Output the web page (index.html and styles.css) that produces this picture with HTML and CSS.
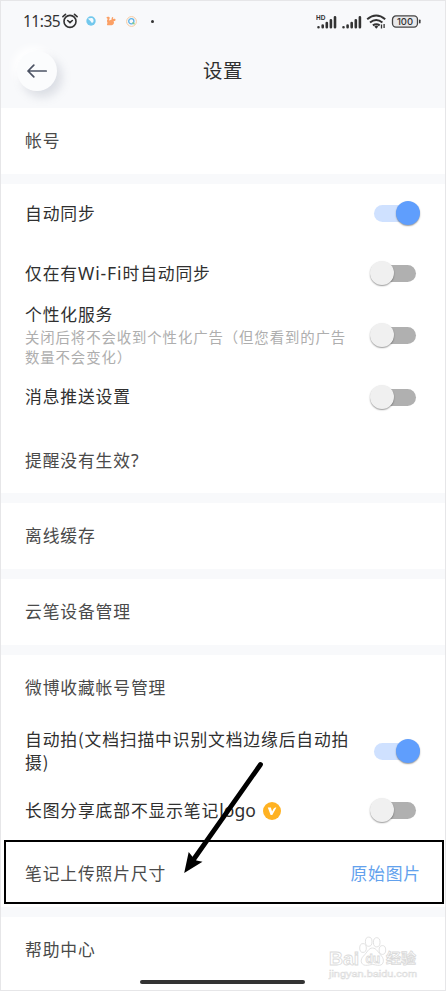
FILE: index.html
```html
<!DOCTYPE html>
<html lang="zh-CN">
  <head>
    <meta charset="UTF-8" />
    <meta name="viewport" content="width=device-width, initial-scale=1.0" />
    <title>设置</title>
    <link rel="stylesheet" href="styles.css">
  </head>
  <body>
    <div class="phone">
      <header class="header">
        <div class="statusbar">
          <span class="time">11:35</span>
          <svg class="alarm" width="16" height="16" viewBox="0 0 16 16" fill="none" stroke="#333" stroke-width="1.6" stroke-linecap="round">
            <circle cx="8" cy="8.4" r="6" />
            <path d="M5.7 7.5 8 9.6l2.3-2.1M.9 3.6 3.5 1.3M15.1 3.6l-2.6-2.3" />
          </svg>
          <svg class="app" width="10" height="10" viewBox="0 0 10 10">
            <circle cx="5" cy="5" r="4.7" fill="#72c8ed" />
            <path d="M1.5 2.2C3 3 4 1.6 6 2c1.8.5 2 3 1 4.6C5.8 7 5 6.4 4.700 5.200z" fill="#f4fbff" />
          </svg>
          <svg class="app" width="10" height="10" viewBox="0 0 10 10" fill="#fba065">
            <path d="M.4 1.7C1 .5 3.4.2 3.7 1.7c.2 1.1-.8 1.7-.5 2.500.4.8 1.500-.5 2.500-.7-.5-1.700.6-2.800 1.700-2.300-.8.6-.6 1.300.2 1.800 1.100-.7 2 0 2 1C9.500 5 8.300 5 7.600 5.300c1 1.500 0 3.600-2 4H1.300C.2 8.400 1.800 7.500 1.400 6.500 1 5.600.6 4.500 1.700 3z" />
          </svg>
          <svg class="app" width="11" height="11" viewBox="0 0 11 11" fill="none">
            <circle cx="5.5" cy="5.5" r="4.9" stroke="#f6c9a0" />
            <circle cx="5.3" cy="5.3" r="2.6" stroke="#5fb2e6" stroke-width="1.3" />
            <path d="m6.500 6.500 2 1.800" stroke="#8ccf80" stroke-width="1.4" />
          </svg>
          <span class="dot"></span>
          <svg class="system" width="108" height="18" viewBox="0 0 108 18">
            <text class="hd" x="0" y="7.6">HD</text>
            <g fill="none" stroke="#333" stroke-width="2.6" stroke-linecap="round">
              <path d="M2.5 15.2v.1M6.700 13.500v1.800M10.800 11v4.300M14.900 8.300v7M19 5.200v10.100" />
              <path d="M27.500 15.200v.1M31.600 13.500v1.800M35.700 11v4.300M39.800 8.300v7M43.900 5.200v10.100" />
            </g>
            <g fill="none" stroke="#333" stroke-width="2">
              <path d="M51.200 7.300q9-7.500 18 0M54 10.500q6.200-5 12.400 0M56.900 13.400q3.400-2.500 6.800 0" />
            </g>
            <path d="m58.300 14.500 2-1 2 1-2 2.200z" fill="#333" />
            <path d="M65.500 16.500v-4M68.100 12v4" stroke="#333" stroke-width="1.3" />
            <rect x="76.500" y="3.9" width="25" height="11.2" rx="3.5" fill="#e9e9eb" stroke="#444" stroke-width="1.3" />
            <path d="M103.800 8.200v2.600" stroke="#333" stroke-width="1.5" stroke-linecap="round" />
            <text class="battery" x="89" y="13">100</text>
          </svg>
        </div>
        <div class="titlebar">
          <span class="back">
            <svg width="22" height="14" viewBox="0 0 22 14" fill="none" stroke="#4c5364" stroke-width="1.7" stroke-linecap="round" stroke-linejoin="round">
              <path d="M20.200 7H2M7.800 1.200 2 7l5.800 5.800" />
            </svg>
          </span>
          <h1>设置</h1>
        </div>
      </header>

      <main>
        <section class="group">
          <div class="row single"><span class="label light">帐号</span></div>
        </section>

        <section class="group">
          <div class="row first"><span class="label">自动同步</span><span class="toggle on"></span></div>
          <div class="row wifi"><span class="label">仅在有<span class="latin wide">Wi-Fi</span>时自动同步</span><span class="toggle"></span></div>
          <div class="row">
            <div class="text">
              <span class="label">个性化服务</span>
              <p class="hint">关闭后将不会收到个性化广告（但您看到的广告<br>数量不会变化）</p>
            </div>
            <span class="toggle"></span>
          </div>
          <div class="row"><span class="label">消息推送设置</span><span class="toggle"></span></div>
          <div class="row last"><span class="label light">提醒没有生效<span class="latin wide">?</span></span></div>
        </section>

        <section class="group">
          <div class="row single"><span class="label light">离线缓存</span></div>
        </section>

        <section class="group">
          <div class="row single"><span class="label light">云笔设备管理</span></div>
        </section>

        <section class="group">
          <div class="row single"><span class="label light">微博收藏帐号管理</span></div>
          <div class="row scan"><span class="label">自动拍(文档扫描中识别文档边缘后自动拍<br>摄)</span><span class="toggle on"></span></div>
          <div class="row share">
            <span class="label">长图分享底部不显示笔记<span class="latin">logo</span></span>
            <svg class="vip" width="18" height="18" viewBox="0 0 18 18">
              <circle cx="9" cy="9" r="9" fill="#ffb222" />
              <path d="M4.800 5.500h3l1.300 4 1.300-2.500c.5-1 1.500-1.600 3-1.500L9.300 13H7.600z" fill="#fff" />
            </svg>
            <span class="toggle"></span>
          </div>
          <div class="row photo"><span class="label light">笔记上传照片尺寸</span><span class="value">原始图片</span></div>
        </section>

        <section class="group help">
          <div class="row single"><span class="label light">帮助中心</span></div>
        </section>
      </main>

      <div class="highlight"></div>
      <svg class="arrow" width="90" height="120" viewBox="0 0 90 120">
        <path d="M80.500 4.500 12.500 101" stroke="#000" stroke-width="4.8" stroke-linecap="round" />
        <path d="M4.200 113 8.700 92l4.800 6 3 2.500 6 1.300z" />
      </svg>

      <svg class="watermark" width="100" height="48" viewBox="0 0 100 48">
        <g class="outline">
          <text class="bai" x="1" y="28.5" textLength="30" lengthAdjust="spacingAndGlyphs">Bai</text>
          <ellipse cx="35" cy="12" rx="3.3" ry="4.4" />
          <ellipse cx="40.7" cy="5.7" rx="3.3" ry="4.6" />
          <ellipse cx="48.7" cy="6.3" rx="3.3" ry="4.6" />
          <ellipse cx="54.4" cy="14" rx="3.3" ry="4.4" />
          <path d="M44.500 12c4 0 6 5 9 8s2.500 9-2 9.300c-3 .2-5-.8-7-.8s-4 1-7 .8c-5-.3-5.500-6-2-9.300s5-8 9-8z" />
          <text class="du" x="37.5" y="27">du</text>
          <text class="jingyan" x="58" y="27" textLength="30" lengthAdjust="spacingAndGlyphs">经验</text>
          <text class="site" x="1" y="40.5" textLength="88" lengthAdjust="spacingAndGlyphs">jingyan.baidu.com</text>
        </g>
      </svg>
      <div class="homebar"></div>
    </div>
  </body>
</html>
```

FILE: styles.css
```css
* {
  box-sizing: border-box;
}

body {
  margin: 0;
  font-family: "Noto Sans CJK SC", sans-serif;
  background: #fff;
  color: #303030;
}

.phone {
  position: relative;
  width: 446px;
  height: 991px;
  overflow: hidden;
  border: 1px solid #e6e6e8;
  background: #f8f9fb;
}

.header {
  height: 107px;
}

.statusbar {
  display: flex;
  align-items: center;
  height: 40px;
  padding: 0 24px 0 22px;
}

.time {
  width: 36px;
  font-family: "Noto Sans", sans-serif;
  font-size: 15.5px;
  letter-spacing: -0.5px;
  color: #333;
}

.alarm {
  margin-left: 3px;
}

.app {
  margin-left: 10px;
}

.alarm + .app {
  margin-left: 8px;
}

.dot {
  width: 3px;
  height: 3px;
  margin-left: 14px;
  border-radius: 50%;
  background: #333;
}

.system {
  margin-left: auto;
  margin-right: -3px;
}

.hd {
  font: bold 6.5px "Liberation Sans", sans-serif;
  fill: #333;
}

.battery {
  font: 500 9.5px Inter, sans-serif;
  text-anchor: middle;
  fill: #333;
}

.titlebar {
  display: grid;
  grid-template-columns: 40px 1fr 40px;
  align-items: center;
  height: 59px;
  padding: 0 16px;
}

.back {
  display: flex;
  align-items: center;
  justify-content: center;
  width: 40px;
  height: 40px;
  border-radius: 50%;
  background: #fbfcfd;
  box-shadow: 5px 6px 10px rgba(130, 140, 160, 0.24), -4px -4px 9px #fff;
}

h1 {
  margin: 0;
  padding-bottom: 2px;
  font-size: 19.4px;
  font-weight: 400;
  line-height: 28px;
  letter-spacing: 0.6px;
  text-align: center;
}

.group {
  margin-bottom: 10px;
  background: #fff;
}

.row {
  display: flex;
  align-items: center;
  height: 62px;
  padding: 0 29px 0 24px;
}

.single {
  height: 66px;
}

.first {
  height: 59px;
}

.wifi {
  height: 61px;
}

.last {
  height: 65px;
}

.scan {
  height: 60px;
}

.share {
  height: 59px;
}

.photo {
  height: 67px;
}

.help {
  height: 74px;
  margin-bottom: 0;
}

.label {
  padding-bottom: 1px;
  font-size: 16.8px;
  line-height: 23px;
  letter-spacing: 0.87px;
  white-space: nowrap;
}

.latin {
  font-family: "Noto Sans", sans-serif;
  font-size: 17.5px;
  letter-spacing: 0.1px;
}

.wide {
  letter-spacing: 0.9px;
}

.light {
  color: #4a4a4a;
}

.text {
  display: flex;
  flex-direction: column;
}

.hint {
  margin: 0;
  font-size: 14.4px;
  line-height: 20px;
  letter-spacing: 0.9px;
  white-space: nowrap;
  color: #aeaeae;
}

.toggle {
  position: relative;
  flex: none;
  width: 42px;
  height: 17px;
  margin-left: auto;
  border-radius: 9px;
  background: #b0b0b0;
}

.toggle::after {
  content: "";
  position: absolute;
  top: -4px;
  left: -4px;
  width: 24px;
  height: 24px;
  border-radius: 50%;
  background: #f0f0f0;
  box-shadow: 0 1px 1.5px rgba(0, 0, 0, 0.4);
}

.toggle.on {
  background: #cfe1ff;
}

.toggle.on::after {
  left: 22px;
  background: #5f9efd;
}

.vip {
  margin-left: 7px;
}

.value {
  margin-left: auto;
  margin-right: -5px;
  padding-bottom: 1px;
  font-size: 16.8px;
  letter-spacing: 0.87px;
  color: #62a1ed;
}

/* marks drawn over the list */
.highlight {
  position: absolute;
  top: 839px;
  left: 3px;
  width: 440px;
  height: 64px;
  border: 2px solid #000;
}

.arrow {
  position: absolute;
  top: 759px;
  left: 179px;
}

.watermark {
  position: absolute;
  top: 935px;
  left: 327px;
}

.outline {
  fill: #fff;
  stroke: #dadada;
  stroke-width: 0.8px;
}

.bai {
  font: bold 18px "Liberation Sans", sans-serif;
}

.du {
  font: bold 12px "Liberation Sans", sans-serif;
}

.jingyan {
  font: bold 14px "Noto Sans CJK SC", sans-serif;
}

.site {
  font: 9.5px "Liberation Sans", sans-serif;
  stroke-width: 0.5px;
}

.homebar {
  position: absolute;
  top: 979px;
  left: 139px;
  width: 165px;
  height: 4px;
  border-radius: 2px;
  background: #333;
}
```
